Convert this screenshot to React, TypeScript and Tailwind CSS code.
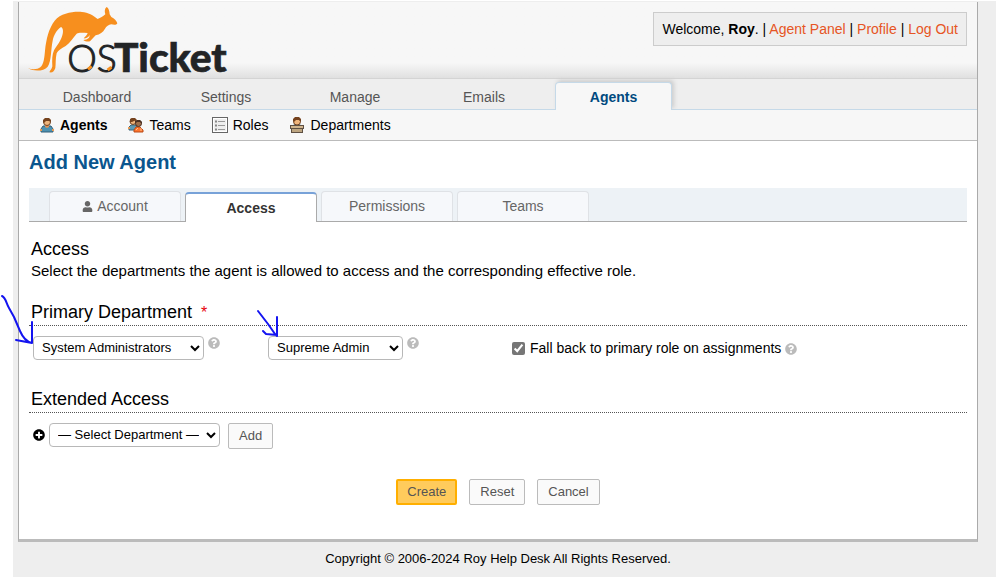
import type { ReactNode } from "react";
import { FaPlusCircle, FaQuestionCircle, FaUser } from "react-icons/fa";

function Logo() {
  return (
    <svg className="block h-[70px] w-[200px] overflow-visible" viewBox="84 15 600 210" role="img" aria-label="osTicket">
      <path
        fill="#f78f1e"
        d="M84 205C98 210 114 208 121 202C132 191 133 172 135 152C139 116 146 86 164 62C184 39 220 34 246 36C264 37 280 46 293 57C301 54 309 49 316 43C313 34 314 25 320 21C326 24 328 32 329 43L334 51C343 55 350 62 352 70C349 76 341 75 334 73C326 74 319 79 315 86C309 97 300 103 287 106C281 111 276 119 270 124C263 126 255 124 250 120C256 119 262 118 267 113L270 105C265 110 260 117 251 115C256 110 261 105 263 99C248 99 238 97 230 101C220 112 211 128 197 138C184 146 174 151 170 160C166 176 168 190 166 204C163 213 158 219 148 217C150 211 156 207 157 199C156 181 156 164 162 151C170 137 183 123 187 106C190 96 190 84 183 81C169 91 162 105 158 122C152 149 155 181 143 200C132 213 104 216 84 205Z"
      />
      <g fill="#222426" stroke="#222426" fontFamily="Lato, sans-serif">
        <text x="202" y="215" fontWeight="300" fontSize="112" strokeWidth="3">OS</text>
        <text x="342" y="216" fontWeight="900" fontSize="122" strokeWidth="2">Ticket</text>
      </g>
      <path d="M264 208l11-9M323 210l11-8" stroke="#f78f1e" strokeWidth="9" />
    </svg>
  );
}

function AgentIcon() {
  return (
    <svg className="size-4" viewBox="0 0 16 16" aria-hidden="true">
      <path d="M2 15V12L4 9H12L14 12V15Z" fill="#4d92b2" stroke="#335f78" />
      <path d="M1 12h2v2H1zM13 12h2v2h-2z" fill="#e69a55" />
      <path d="M6 8h4v2l-2 1-2-1z" fill="#dc9259" />
      <circle cx="8" cy="5" r="3.5" fill="#efb57c" stroke="#704222" />
      <path d="M4 5V3l2-2h4l2 2v2l-2-1H7L5 6z" fill="#75421e" />
    </svg>
  );
}

function TeamIcon() {
  return (
    <svg className="size-4" viewBox="0 0 16 16" aria-hidden="true">
      <path d="M1 12v-2l2-2h5l2 3v2H1z" fill="#5e9ab5" stroke="#3b6578" />
      <path d="M0 10h2v2H0z" fill="#e69a55" />
      <circle cx="5" cy="4.5" r="3" fill="#efb57c" stroke="#704222" />
      <path d="M2 5V2l2-1h3l2 2-3 1-2 1z" fill="#75421e" />
      <path d="M6 15v-2l2-3h4l3 3v2z" fill="#ff752c" stroke="#b84b19" />
      <path d="M8 13l2-2M13 11v3" stroke="#ffbd8b" />
      <circle cx="10.5" cy="6.5" r="3" fill="#9f704d" stroke="#4b3022" />
      <path d="M7 6V4l2-1h3l2 2v2l-2-2H9z" fill="#4b3022" />
    </svg>
  );
}

function RoleIcon() {
  return (
    <svg className="size-4" viewBox="0 0 16 16" aria-hidden="true">
      <rect x=".5" y=".5" width="15" height="15" fill="#fff" stroke="#666" />
      <path d="M2 2h12v12H2z" fill="#eee" />
      <path d="M6 4.5h7M6 8.5h7M6 12.5h7" stroke="#999" />
      <path d="M3 4.5h2M3 8.5h2M3 12.5h2" stroke="#888" strokeWidth="2" />
    </svg>
  );
}

function DepartmentIcon() {
  return (
    <svg className="size-4" viewBox="0 0 16 16" aria-hidden="true">
      <path d="M4 9l1-2h6l1 2z" fill="#5e9ab5" />
      <circle cx="8" cy="4.5" r="3.5" fill="#efb57c" stroke="#704222" />
      <path d="M4 4V2l2-2h4l2 2v3l-2-2H7L5 5z" fill="#75421e" />
      <rect x="1.5" y="8.5" width="13" height="3" fill="#d0b58e" stroke="#5e5043" />
      <rect x="2.5" y="11.5" width="11" height="4" fill="#bda580" stroke="#5e5043" />
    </svg>
  );
}

const mainTabs = ["Dashboard", "Settings", "Manage", "Emails", "Agents"];

function SubLink({ icon, children, active = false }: { icon: ReactNode; children: ReactNode; active?: boolean }) {
  return (
    <a href="#" className={active ? "flex items-center gap-[5px] font-bold" : "flex items-center gap-[5px]"}>
      {icon}
      {children}
    </a>
  );
}

function Dropdown({ label, value, width }: { label: string; value: string; width: string }) {
  return (
    <span className={`relative block ${width}`}>
      <select
        aria-label={label}
        className="block h-6 w-full appearance-none rounded border border-[#b8b8b8] bg-white pr-5 pl-2 text-[13px] leading-5 text-black"
      >
        <option>{value}</option>
      </select>
      <svg className="pointer-events-none absolute top-2 right-1 h-2 w-[10px]" viewBox="0 0 10 8" aria-hidden="true">
        <path d="M1 2l4 4 4-4" fill="none" stroke="#000" strokeWidth="2" />
      </svg>
    </span>
  );
}

function Help() {
  return (
    <button type="button" aria-label="Help" className="block pt-px text-[#bbb]">
      <FaQuestionCircle className="size-3" />
    </button>
  );
}

const tabBase = "flex w-[132px] items-center justify-center gap-1 rounded-t border";
const idleTab = `${tabBase} h-[30px] border-b-0 border-[#dfe2e6] bg-[#f6f8fb] pb-px text-[#666]`;
const plainButton = "h-[26px] rounded-xs border border-[#bbb] bg-[#fafafa] px-[10px] text-[13px] text-[#555]";
const sectionTitle = "border-b border-dotted border-[#555] px-[2px] pb-px text-lg leading-6";

export default function App() {
  return (
    <div className="relative min-h-screen bg-white pt-px pl-[13px] font-['Liberation_Sans',Arial,sans-serif] text-[14px] leading-5 text-black">
      <div className="min-h-[calc(100vh-1px)] bg-[#eee] pt-px pr-[18px] pl-[5px]">
        <div className="border-x border-b-[3px] border-[#aaa] border-b-[#bbb] bg-white">
          <header className="flex h-[77px] items-start justify-between border-b border-[#d4d4d4] bg-linear-to-b from-[#f7f7f7] from-80% to-[#e0e0e0] pr-[10px] pl-[9px]">
            <a href="#" className="pt-[3px]">
              <Logo />
            </a>
            <p className="mt-[10px] border border-[#ccc] bg-[#eee] px-2 py-[6px]">
              Welcome, <strong>Roy</strong>. | <a href="#" className="text-[#e65524]">Agent Panel</a> |{" "}
              <a href="#" className="text-[#e65524]">Profile</a> | <a href="#" className="text-[#e65524]">Log Out</a>
            </p>
          </header>
          <nav aria-label="Main" className="flex h-[31px] items-end gap-[13px] border-b border-[#c5d9e8] bg-[#eee] pl-5">
            {mainTabs.map((tab) => (
              <a
                key={tab}
                href="#"
                className={
                  tab === "Agents"
                    ? "-mb-px flex h-[28px] w-[117px] items-center justify-center rounded-t border border-b-0 border-[#c5d9e8] bg-[#f7f7f7] font-bold text-[#004a80] shadow-[2px_-2px_4px_#ccc]"
                    : "flex h-6 w-[116px] items-center justify-center text-[#555]"
                }
              >
                {tab}
              </a>
            ))}
          </nav>
          <nav aria-label="Agents" className="relative flex h-[31px] items-center gap-[21px] border-b border-[#bbb] bg-[#f7f7f7] pl-5">
            <SubLink icon={<AgentIcon />} active>Agents</SubLink>
            <SubLink icon={<TeamIcon />}>Teams</SubLink>
            <SubLink icon={<RoleIcon />}>Roles</SubLink>
            <SubLink icon={<DepartmentIcon />}>Departments</SubLink>
          </nav>
          <main className="px-[10px] pt-[9px] pb-[34px]">
            <h1 className="text-xl leading-6 font-bold text-[#0a568e]">Add New Agent</h1>
            <div role="tablist" className="mt-[14px] flex h-[34px] items-end gap-1 border-b border-[#aaa] bg-[#edf2f6] pl-5 text-[14px]">
              <button type="button" role="tab" className={idleTab}>
                <FaUser className="size-[11px]" />
                Account
              </button>
              <button
                type="button"
                role="tab"
                aria-selected="true"
                className={`${tabBase} -mb-px h-[30px] border-t-2 border-b-0 border-[#aaa] border-t-[#78a2d8] bg-white font-bold text-[#333]`}
              >
                Access
              </button>
              <button type="button" role="tab" className={idleTab}>Permissions</button>
              <button type="button" role="tab" className={idleTab}>Teams</button>
            </div>
            <form onSubmit={(event) => event.preventDefault()}>
              <h2 className="mt-[15px] px-[2px] text-lg leading-6">Access</h2>
              <p className="px-[2px] text-[15px]">
                Select the departments the agent is allowed to access and the corresponding effective role.
              </p>
              <h2 className={`mt-[19px] ${sectionTitle}`}>
                Primary Department <span className="ml-1 text-base leading-4 text-red-600">*</span>
              </h2>
              <div className="mt-[10px] grid grid-cols-[235px_244px_1fr] pl-1">
                <div className="flex items-start gap-1">
                  <Dropdown label="Primary department" value="System Administrators" width="w-[171px]" />
                  <Help />
                </div>
                <div className="flex items-start gap-1">
                  <Dropdown label="Primary role" value="Supreme Admin" width="w-[135px]" />
                  <Help />
                </div>
                <div className="flex items-center gap-1">
                  <label className="flex items-center gap-[5px]">
                    <input type="checkbox" defaultChecked className="size-[13px] accent-[#767676]" />
                    Fall back to primary role on assignments
                  </label>
                  <Help />
                </div>
              </div>
              <h2 className={`mt-[27px] ${sectionTitle}`}>Extended Access</h2>
              <div className="mt-[10px] flex items-start gap-1 pl-1">
                <FaPlusCircle className="my-[6px] size-3" />
                <Dropdown label="Extended department" value="— Select Department —" width="w-[171px]" />
                <button type="button" className={`${plainButton} ml-1`}>Add</button>
              </div>
              <div className="mt-[30px] flex justify-center gap-3">
                <button type="submit" className="h-[26px] rounded-xs border-2 border-[#ffaf00] bg-[#ffcb5c] px-[9px] text-[13px] text-[#555]">Create</button>
                <button type="reset" className={plainButton}>Reset</button>
                <button type="button" className={plainButton}>Cancel</button>
              </div>
            </form>
          </main>
        </div>
        <footer className="pt-[7px] text-center text-[13px]">Copyright © 2006-2024 Roy Help Desk All Rights Reserved.</footer>
      </div>
      <svg className="pointer-events-none absolute top-[290px] left-0 h-[60px] w-[290px]" viewBox="0 290 290 60" fill="none" stroke="#1414f0" strokeWidth="2" strokeLinecap="round" strokeLinejoin="round" aria-hidden="true">
        <path d="M2 296C6 298 6 303 9 308L14 317L20 331C23 338 27 342 32 343V322M32 343L16 340" />
        <path d="M258 311L268 324L275 334L277 336V317M277 335L266 334L263 331" />
      </svg>
    </div>
  );
}
